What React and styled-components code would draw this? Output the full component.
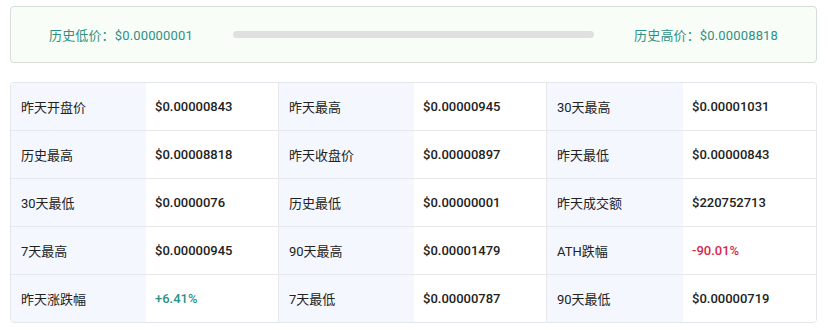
import React from 'react'
import styled, { createGlobalStyle } from 'styled-components'

const GlobalStyle = createGlobalStyle`
  body {
    margin: 0;
    background: #ffffff;
    font-family: Roboto, "Noto Sans CJK SC", sans-serif;
  }
`

const Page = styled.div`
  padding: 6px 11px 8px 10px;
  display: flex;
  flex-direction: column;
  gap: 19px;
`

const RangeBox = styled.div`
  height: 55px;
  border: 1px solid #d5ded8;
  border-radius: 4px;
  background: #f8fdf7;
  display: flex;
  align-items: center;
  gap: 40px;
  padding: 0 38px;
`

const RangeText = styled.span`
  font-size: 13px;
  letter-spacing: 0.15px;
  color: #2e9186;
  white-space: nowrap;
`

const Bar = styled.div`
  flex: 1;
  height: 7px;
  border-radius: 4px;
  background: #e0e0e0;
`

const Table = styled.div`
  border: 1px solid #e3e6ea;
  border-radius: 4px;
  display: grid;
  grid-template-columns: 135px 133px 135px 133px 136px 1fr;
  overflow: hidden;
`

const Cell = styled.div`
  height: 47px;
  display: flex;
  align-items: center;
  padding-left: ${p => (p.$label ? '10px' : '9px')};
  font-size: 13px;
  color: #222222;
  background: ${p => (p.$label ? '#f4f7fd' : '#ffffff')};
  font-weight: ${p => (p.$label ? 400 : 500)};
  border-top: ${p => (p.$first ? 'none' : '1px solid #e6e8ec')};
  border-right: ${p => (p.$divider ? '1px solid #e6e8ec' : 'none')};
  ${p => p.$tone === 'up' && 'color: #2e9186;'}
  ${p => p.$tone === 'down' && 'color: #d7264d;'}
`

const rows = [
  [['昨天开盘价', '$0.00000843'], ['昨天最高', '$0.00000945'], ['30天最高', '$0.00001031']],
  [['历史最高', '$0.00008818'], ['昨天收盘价', '$0.00000897'], ['昨天最低', '$0.00000843']],
  [['30天最低', '$0.0000076'], ['历史最低', '$0.00000001'], ['昨天成交额', '$220752713']],
  [['7天最高', '$0.00000945'], ['90天最高', '$0.00001479'], ['ATH跌幅', '-90.01%', 'down']],
  [['昨天涨跌幅', '+6.41%', 'up'], ['7天最低', '$0.00000787'], ['90天最低', '$0.00000719']],
]

export default function App() {
  return (
    <>
      <GlobalStyle />
      <Page>
        <RangeBox>
          <RangeText>历史低价：$0.00000001</RangeText>
          <Bar />
          <RangeText>历史高价：$0.00008818</RangeText>
        </RangeBox>
        <Table>
          {rows.map((row, r) =>
            row.map(([label, value, tone], c) => (
              <React.Fragment key={`${r}-${c}`}>
                <Cell $label $first={r === 0}>{label}</Cell>
                <Cell $first={r === 0} $divider={c < 2} $tone={tone}>{value}</Cell>
              </React.Fragment>
            ))
          )}
        </Table>
      </Page>
    </>
  )
}
